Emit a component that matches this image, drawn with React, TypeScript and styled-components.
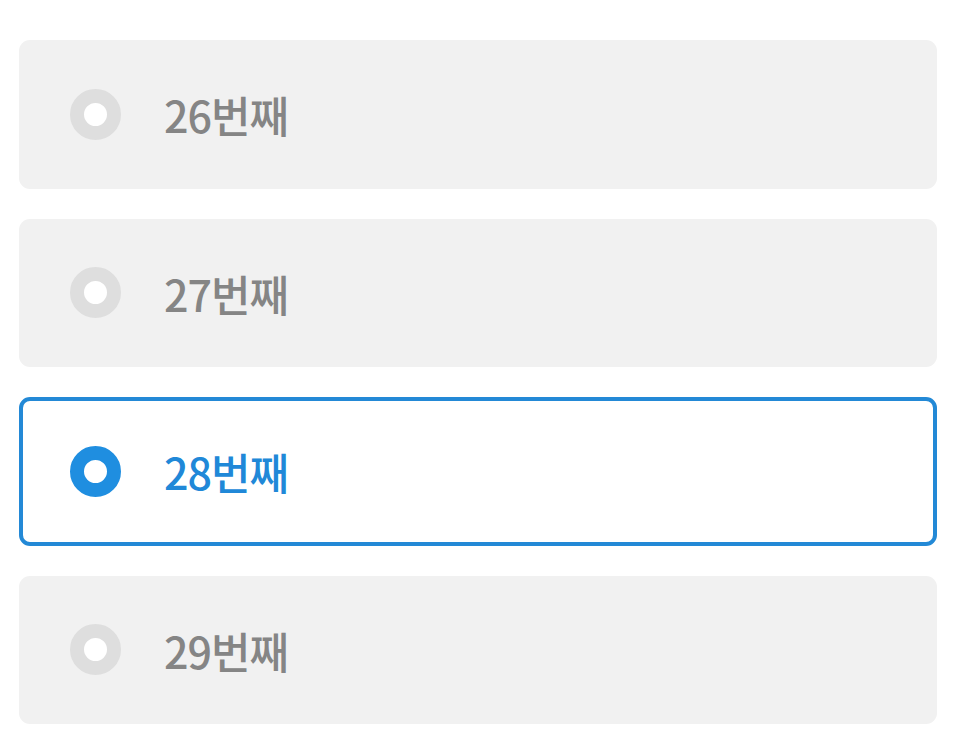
import React, { useState } from "react";
import styled, { createGlobalStyle } from "styled-components";

const Global = createGlobalStyle`
  html, body { margin: 0; padding: 0; background: #ffffff; }
  body { font-family: "Noto Sans CJK KR", "Noto Sans", sans-serif; }
`;

const List = styled.div`
  display: flex;
  flex-direction: column;
  gap: 30px;
  padding: 40px 31px 0 19px;
`;

const Option = styled.label<{ $selected: boolean }>`
  box-sizing: border-box;
  height: 148.5px;
  display: flex;
  align-items: center;
  gap: 43px;
  padding-left: ${(p) => (p.$selected ? 47 : 51)}px;
  border-radius: 11px;
  background: ${(p) => (p.$selected ? "#ffffff" : "#f1f1f1")};
  border: ${(p) => (p.$selected ? "4px solid #2389d6" : "none")};
  cursor: pointer;
`;

const Radio = styled.span<{ $selected: boolean }>`
  box-sizing: border-box;
  width: 51px;
  height: 51px;
  border-radius: 50%;
  border: 14.5px solid ${(p) => (p.$selected ? "#1f8ee0" : "#dedede")};
  background: #ffffff;
  flex: none;
`;

const Label = styled.span<{ $selected: boolean }>`
  font-size: 43px;
  font-weight: 500;
  letter-spacing: -1px;
  color: ${(p) => (p.$selected ? "#2088d8" : "#858585")};
  line-height: 1;
  margin-top: 1px;
`;

const items = ["26번째", "27번째", "28번째", "29번째"];

export default function App() {
  const [sel, setSel] = useState(2);
  return (
    <>
      <Global />
      <List>
        {items.map((t, i) => (
          <Option key={t} $selected={sel === i} onClick={() => setSel(i)}>
            <Radio $selected={sel === i} />
            <Label $selected={sel === i}>{t}</Label>
          </Option>
        ))}
      </List>
    </>
  );
}
